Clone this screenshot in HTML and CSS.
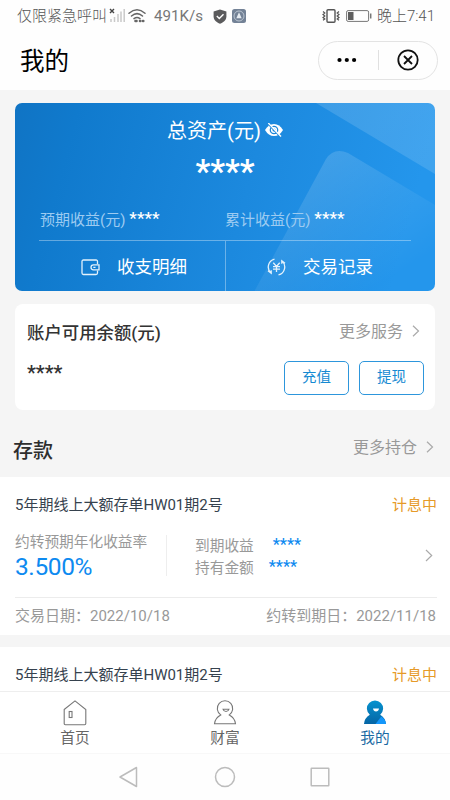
FILE: index.html
```html
<!DOCTYPE html>
<html lang="zh-CN">
<head>
<meta charset="utf-8">
<title>我的</title>
<link rel="stylesheet" href="styles.css">
</head>
<body>
<div class="phone">
  <div class="status">
    <span class="status-text carrier">仅限紧急呼叫</span>
    <svg class="signal" width="17" height="16" viewBox="0 0 17 16"><path d="M1 1l4 4M5 1l-4 4" stroke="#444" stroke-width="1.4"/><path d="M2 11v3M5.500 9v5M9 6v8M12 3.500v10.500M15.200 1v13" stroke="#c9c9c9" stroke-width="1.500"/></svg>
    <svg class="wifi" width="18" height="16" viewBox="0 0 18 16" fill="none" stroke="#666" stroke-width="1.500" stroke-linecap="round"><path d="M1 5.200Q9-1.800 17 5.200M3.500 8Q9 3.200 14.500 8M6 10.600Q9 8.300 12 10.600"/><path d="M7.500 13h1M12 13h.3M15 13h.3" stroke-width="2.600"/></svg>
    <span class="status-text speed">491K/s</span>
    <svg class="shield" width="14" height="15" viewBox="0 0 14 15"><path d="M7 .4L13.400 2.400V7.500C13.400 11 10.500 13.500 7 14.700 3.500 13.500.6 11 .6 7.500V2.400z" fill="#5b5b5d"/><path d="M3.800 7l2.500 2.500 4.200-4.200" fill="none" stroke="#fff" stroke-width="1.400"/></svg>
    <svg class="app" width="14" height="14" viewBox="0 0 14 14"><rect width="14" height="14" rx="2.500" fill="#738296"/><circle cx="7" cy="7" r="5" fill="none" stroke="#c2ccd7" stroke-width=".9"/><path d="M7 3.200L4.300 9.200h5.400z" fill="#e5ebf1"/></svg>
    <svg class="vibrate" width="18" height="14" viewBox="0 0 18 14" fill="none" stroke="#555" stroke-width="1.400"><rect x="5" y=".8" width="8" height="12.400" rx="1"/><path d="M1 2.500l1.800 1.500L1 5.500l1.800 1.500L1 8.500l1.800 1.500L1 11.300M17 2.500l-1.800 1.500L17 5.500l-1.800 1.500L17 8.500l-1.800 1.500L17 11.300" stroke-width="1.200"/></svg>
    <svg class="battery" width="26" height="12" viewBox="0 0 26 12"><rect x=".6" y=".6" width="22" height="10.800" rx="1.500" fill="none" stroke="#777" stroke-width="1"/><rect x="2" y="2" width="5.500" height="8" fill="#5f5f5f"/><path d="M24.700 3.500v5" stroke="#777" stroke-width="1.500"/></svg>
    <span class="status-text clock">晚上7:41</span>
  </div>

  <header class="header">
    <h1 class="page-title">我的</h1>
    <div class="capsule">
      <svg class="dots" width="20" height="6" viewBox="0 0 20 6"><circle cx="2.500" cy="3" r="2.100"/><circle cx="9.800" cy="3" r="2.100"/><circle cx="17.100" cy="3" r="2.100"/></svg>
      <span class="capsule-line"></span>
      <svg class="close" width="22" height="22" viewBox="0 0 22 22" fill="none" stroke="#111" stroke-width="1.800"><circle cx="11" cy="11" r="9.700"/><path d="M7 7l8 8M15 7l-8 8"/></svg>
    </div>
  </header>

  <main class="content">
    <section class="assets">
      <svg class="assets-bg" width="420" height="189" viewBox="0 0 420 189">
        <defs>
          <linearGradient id="base" x1="0" y1="0" x2="1" y2=".12"><stop offset="0" stop-color="#1074c4"/><stop offset=".15" stop-color="#107acd"/><stop offset=".6" stop-color="#1c89de"/><stop offset="1" stop-color="#2496ec"/></linearGradient>
          <linearGradient id="sheet" x1="0" y1="0" x2=".7" y2="1"><stop offset="0" stop-color="#fff" stop-opacity=".14"/><stop offset="1" stop-color="#fff" stop-opacity=".13"/></linearGradient>
          <linearGradient id="fold" gradientUnits="userSpaceOnUse" x1="310" y1="50" x2="385" y2="170"><stop offset="0" stop-color="#fff" stop-opacity=".15"/><stop offset=".5" stop-color="#fff" stop-opacity=".07"/><stop offset="1" stop-color="#fff" stop-opacity="0"/></linearGradient>
        </defs>
        <rect width="420" height="189" fill="url(#base)"/>
        <path d="M301 0H420V71z" fill="url(#sheet)"/>
        <path d="M239 189L311 56Q319 44 333 50L420 102V189z" fill="url(#fold)"/>
      </svg>
      <div class="assets-head"><span>总资产(元)</span>
        <svg class="eye" width="18" height="14" viewBox="0 0 18 14"><path d="M0 7Q3.500 1 9 1T18 7Q14.500 13 9 13T0 7z" fill="#fff"/><circle cx="9" cy="7" r="3.700" fill="none" stroke="#1c87da" stroke-width="1.300"/><circle cx="9" cy="7" r="1.500" fill="#1c87da"/><path d="M2.300 0L15 13.500" stroke="#1c87da" stroke-width="1.500"/><path d="M3.300 0L16 13.500" stroke="#fff" stroke-width="1.300"/></svg>
      </div>
      <div class="assets-total">****</div>
      <div class="earnings">
        <div class="earning"><span class="earning-label">预期收益(元)</span><span class="earning-value">****</span></div>
        <div class="earning"><span class="earning-label">累计收益(元)</span><span class="earning-value">****</span></div>
      </div>
      <div class="links">
        <div class="link">
          <svg width="19" height="17" viewBox="0 0 19 17" fill="none" stroke="#e4f2fc" stroke-width="1.300"><path d="M16.500 5V2.500Q16.500 1 15 1H2.500Q1 1 1 2.500V14Q1 15.500 2.500 15.500H15Q16.500 15.500 16.500 14V11.500"/><path d="M18 5.800H12.500Q10 5.800 10 8.300T12.500 10.800H18z"/><path d="M12.300 8.300h2.200"/></svg>
          <span>收支明细</span>
        </div>
        <div class="link">
          <svg width="19" height="18" viewBox="0 0 19 18" fill="none" stroke="#e4f2fc" stroke-width="1.300"><path d="M7.500 1.100A8.100 8.100 0 0 0 4.200 15.200V12.200M1 12.800L4.200 15.300M11.500 16.900A8.100 8.100 0 0 0 14.800 2.800V5.800M18 5.200L14.800 2.700"/><path d="M6.300 4.800L9.500 8.500 12.700 4.800M9.500 8.500V14M6 8.600H13M6 11.200H13"/></svg>
          <span>交易记录</span>
        </div>
      </div>
    </section>

    <section class="balance">
      <div class="balance-head">
        <h2 class="balance-title">账户可用余额(元)</h2>
        <a class="more">更多服务<svg width="8" height="12" viewBox="0 0 8 12"><path d="M1 .8L6.500 6 1 11.200"/></svg></a>
      </div>
      <div class="balance-body">
        <span class="balance-value">****</span>
        <div class="actions"><button class="btn">充值</button><button class="btn">提现</button></div>
      </div>
    </section>

    <div class="section-head">
      <h2 class="section-title">存款</h2>
      <a class="more">更多持仓<svg width="8" height="12" viewBox="0 0 8 12"><path d="M1 .8L6.500 6 1 11.200"/></svg></a>
    </div>

    <article class="deposit">
      <div class="deposit-head"><span class="deposit-name">5年期线上大额存单HW01期2号</span><span class="deposit-state">计息中</span></div>
      <div class="deposit-body">
        <div class="rate"><div class="rate-label">约转预期年化收益率</div><div class="rate-value">3.500%</div></div>
        <div class="figures">
          <div class="figure"><span>到期收益</span><b class="stars stars-far">****</b></div>
          <div class="figure"><span>持有金额</span><b class="stars">****</b></div>
        </div>
        <svg class="go" width="8" height="13" viewBox="0 0 8 13"><path d="M1 1L6.700 6.500 1 12"/></svg>
      </div>
      <div class="deposit-foot"><span>交易日期：2022/10/18</span><span>约转到期日：2022/11/18</span></div>
    </article>

    <article class="deposit">
      <div class="deposit-head"><span class="deposit-name">5年期线上大额存单HW01期2号</span><span class="deposit-state">计息中</span></div>
    </article>
  </main>

  <nav class="tabs">
    <div class="tab">
      <svg width="26" height="26" viewBox="0 0 26 26" fill="none" stroke="#777" stroke-width="1.100"><path d="M2.200 9.500L13 .9 23.800 9.500V23.500Q23.800 24.700 22.600 24.700H3.400Q2.200 24.700 2.200 23.500z"/><rect x="7.200" y="11.500" width="2.800" height="6"/></svg>
      <span>首页</span>
    </div>
    <div class="tab">
      <svg width="26" height="26" viewBox="0 0 26 26" fill="none" stroke="#777" stroke-width="1.100"><path d="M2.500 23.700Q3 18 8.700 14.900A7.700 7.700 0 1 1 17.300 14.900Q23 18 23.500 23.700z"/><path d="M11 9.200H17Q16.300 11.500 14 11.500T11 9.200z"/></svg>
      <span>财富</span>
    </div>
    <div class="tab tab-active">
      <svg width="26" height="26" viewBox="0 0 26 26"><defs><linearGradient id="me" x1="0" y1="0" x2="0" y2="1"><stop offset="0" stop-color="#0793cf"/><stop offset="1" stop-color="#0565a5"/></linearGradient></defs><path d="M2 23.900Q2.500 18 7.800 14.800A8.100 8.100 0 1 1 18.200 14.800Q23.400 18 24 23.900z" fill="url(#me)"/><path d="M13.500 23.900L19.300 16.600Q23.400 19.200 24 23.900z" fill="#1497fb"/><path d="M11 8.500H17Q16.500 11.500 14 11.500T11 8.500z" fill="#fff"/></svg>
      <span>我的</span>
    </div>
  </nav>

  <div class="sysnav">
    <svg width="21" height="22" viewBox="0 0 21 22"><path d="M18.500 1.500V20.500L2 11z"/></svg>
    <svg width="22" height="22" viewBox="0 0 22 22"><circle cx="11" cy="11" r="9.500"/></svg>
    <svg width="20" height="20" viewBox="0 0 20 20"><rect x="1.200" y="1.200" width="17.600" height="17.600" rx=".5"/></svg>
  </div>
</div>
</body>
</html>
```
FILE: styles.css
```css
* { box-sizing: border-box; margin: 0; padding: 0; }
body { font-family: Roboto, "Noto Sans CJK SC", sans-serif; background: #fff; }
svg { display: block; flex: none; }
span, h1, h2, a, b { white-space: nowrap; }

.phone { width: 450px; height: 800px; display: flex; flex-direction: column; overflow: hidden; background: #fefefe; }

.status { height: 32px; flex: none; display: flex; align-items: center; padding: 0 15px 0 17px; }
.status-text { font-size: 15px; line-height: 20px; font-weight: 300; color: #555; }
.signal { margin-left: 2px; }
.wifi { margin-left: 2px; }
.speed { margin-left: 8px; width: 50px; font-size: 15.100px; font-weight: 400; color: #777; }
.shield { margin-left: 9px; }
.app { margin-left: 5px; }
.vibrate { margin-left: auto; }
.battery { margin: 0 5px 0 6px; }

.header { height: 58px; flex: none; display: flex; align-items: center; justify-content: space-between; padding: 0 12px 0 20px; }
.page-title { font-size: 24.500px; line-height: 36px; font-weight: 400; color: #000; padding-top: 2px; }
.capsule { width: 120px; height: 39px; margin-top: -2px; border: 1px solid #e3e3e3; border-radius: 20px; display: flex; align-items: center; justify-content: space-between; padding: 0 18px; }
.capsule-line { width: 1px; height: 20px; background: #e0e0e0; margin-left: 2px; }

.content { flex: 1; min-height: 0; overflow: hidden; background: #f5f5f5; padding-top: 13px; }

.assets { position: relative; height: 188px; margin: 0 15px; border-radius: 7px; overflow: hidden; color: #fff; }
.assets-bg { position: absolute; left: 0; top: 0; }
.assets > div { position: relative; }
.assets-head { display: flex; justify-content: center; align-items: center; gap: 4px; padding-top: 13px; font-size: 20px; line-height: 30px; }
.eye { margin-top: -3px; }
.assets-total { text-align: center; font-size: 32.500px; line-height: 40px; font-weight: 700; margin-top: 6px; height: 47px; }
.earnings { display: grid; grid-template-columns: 1fr 1fr; margin: 9px 24px 0; height: 33px; border-bottom: 1px solid rgba(255,255,255,.35); }
.earning { display: flex; gap: 4px; padding-left: 1px; line-height: 24px; }
.earning + .earning { padding-left: 0; }
.earning-label { font-size: 15px; color: #9dcbf1; }
.earning-value { font-size: 17px; font-weight: 500; margin-top: -2px; }
.links { display: grid; grid-template-columns: 1fr 1fr; height: 52px; }
.link { display: flex; align-items: center; gap: 17px; padding-left: 66px; font-size: 17.500px; line-height: 26px; }
.link + .link { padding-left: 41px; border-left: 1px solid rgba(255,255,255,.35); }

.balance { height: 106px; margin: 13px 15px 0; padding: 15px 11px 0 12px; border-radius: 8px; background: #fff; }
.balance-head { display: flex; justify-content: space-between; height: 26px; }
.balance-title { font-size: 17.400px; line-height: 28px; font-weight: 500; color: #333; }
.more { display: flex; align-items: center; gap: 9px; font-size: 16px; line-height: 24px; color: #999; height: 24px; }
.more svg { margin-top: -3px; }
.more path, .go path { fill: none; stroke: #aaa; stroke-width: 1.200; }
.balance-head .more { margin: 1px 4px 0 0; }
.balance-body { display: flex; justify-content: space-between; padding-top: 16px; }
.balance-value { font-size: 20px; line-height: 24px; font-weight: 500; color: #333; }
.actions { display: flex; gap: 10px; }
.btn { width: 65px; height: 34px; border: 1.500px solid #2d96dc; border-radius: 5px; background: #fff; color: #168ad2; font: 400 14.500px/32px Roboto, "Noto Sans CJK SC", sans-serif; }

.section-head { height: 67px; display: flex; justify-content: space-between; padding: 26px 16px 0 13px; }
.section-title { font-size: 20px; line-height: 30px; font-weight: 500; color: #2e2e2e; }

.deposit { background: #fff; padding: 0 13px 0 15px; height: 158px; margin-bottom: 12px; }
.deposit-head { display: flex; justify-content: space-between; padding: 16px 0 0; font-size: 15px; line-height: 24px; }
.deposit-name { color: #36424e; }
.deposit-state { color: #e69a28; }
.deposit-body { display: flex; align-items: center; height: 81px; padding-bottom: 4px; border-bottom: 1px solid #ececec; }
.rate { width: 152px; height: 41px; display: flex; flex-direction: column; justify-content: center; border-right: 1px solid #eee; }
.rate-label { font-size: 14.700px; line-height: 24px; color: #999; }
.rate-value { font-size: 24.500px; letter-spacing: -.4px; line-height: 26px; color: #0d8af0; }
.figures { padding: 3px 0 0 28px; font-size: 14.700px; line-height: 22px; color: #999; }
.figure { display: flex; }
.stars { font-size: 16px; font-weight: 500; color: #0d8af0; margin: -1px 0 0 15px; height: 22px; }
.stars-far { margin-left: 19px; }
.go { margin: 0 4px 0 auto; }
.deposit-foot { display: flex; justify-content: space-between; font-size: 15px; line-height: 24px; color: #999; padding: 6px 1px 0 0; }

.tabs { height: 62px; flex: none; display: grid; grid-template-columns: repeat(3, 1fr); border-top: 1px solid #eee; background: #fff; }
.tab { display: flex; flex-direction: column; align-items: center; padding-top: 8px; font-size: 14.700px; line-height: 24px; color: #666; }
.tab-active { color: #1b6aa3; }
.sysnav { height: 47px; flex: none; display: flex; align-items: center; justify-content: space-between; padding: 0 120px 1px 118px; background: #fefefe; border-top: 1px solid #f8f8f8; }
.sysnav svg { fill: none; stroke: #bcbcbc; stroke-width: 1.500; stroke-linejoin: round; }
```
